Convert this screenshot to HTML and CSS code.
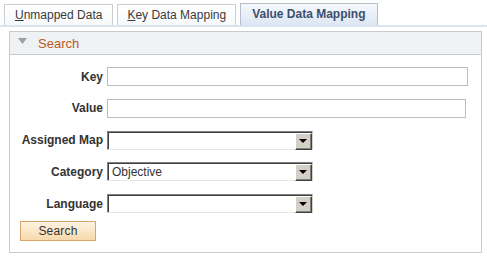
FILE: index.html
```html
<!DOCTYPE html>
<html>
<head>
<meta charset="utf-8">
<link rel="stylesheet" href="styles.css">
</head>
<body>
<div class="tabs">
  <div class="tab"><span class="ak">U</span>nmapped Data</div>
  <div class="tab"><span class="ak">K</span>ey Data Mapping</div>
  <div class="tab active">Value Data Mapping</div>
</div>
<div class="panel">
  <div class="panel-head">
    <svg class="tri" width="9" height="6" viewBox="0 0 9 6"><polygon points="0,0 9,0 4.5,6" fill="#a0a0a0"/></svg>
    <span class="panel-title">Search</span>
  </div>
  <div class="panel-body">
    <div class="form">
      <div class="row">
        <label class="lbl">Key</label>
        <div class="input w-key"></div>
      </div>
      <div class="row">
        <label class="lbl">Value</label>
        <div class="input w-value"></div>
      </div>
      <div class="row">
        <label class="lbl">Assigned Map</label>
        <div class="select"><span class="sel-val"></span><span class="sel-btn"><span class="caret"></span></span></div>
      </div>
      <div class="row">
        <label class="lbl">Category</label>
        <div class="select"><span class="sel-val">Objective</span><span class="sel-btn"><span class="caret"></span></span></div>
      </div>
      <div class="row">
        <label class="lbl">Language</label>
        <div class="select"><span class="sel-val"></span><span class="sel-btn"><span class="caret"></span></span></div>
      </div>
    </div>
    <button class="btn">Search</button>
  </div>
</div>
</body>
</html>
```

FILE: styles.css
```css
html, body {
  margin: 0;
  padding: 0;
  background: #fff;
  font-family: "Liberation Sans", Arial, sans-serif;
  font-size: 12px;
  color: #333;
}

.tabs {
  display: flex;
  align-items: flex-end;
  gap: 4px;
  padding: 3px 0 0 4px;
  border-bottom: 2px solid #d9e4f1;
  height: 22px;
}

.tab {
  box-sizing: border-box;
  height: 21px;
  padding: 0 10px 0 10px;
  border: 1px solid #c9ced5;
  border-bottom: none;
  background: linear-gradient(#ffffff, #f7f9fb);
  color: #3a3a3a;
  line-height: 20px;
  white-space: nowrap;
}

.tab:nth-child(2) {
  padding: 0 9px;
}

.ak {
  text-decoration: underline;
}

.tab.active {
  height: 22px;
  line-height: 21px;
  font-weight: bold;
  color: #3c4e6e;
  padding: 0 11px;
  border-color: #b4bfcc;
  background: linear-gradient(#f6f9fc, #dce6f2);
}

.panel {
  margin: 4px 5px 0 9px;
}

.panel-head {
  box-sizing: border-box;
  height: 24px;
  border: 1px solid #c8cacd;
  background: #eef2f4;
  display: flex;
  align-items: center;
  padding-left: 8px;
}

.tri {
  margin-top: -5px;
}

.panel-title {
  margin-left: 11px;
  font-size: 13px;
  color: #bf5a1a;
}

.panel-body {
  border: 1px solid #c8cacd;
  border-top: none;
  height: 198px;
  box-sizing: border-box;
  padding: 12px 0 0 10px;
}

.form {
  display: flex;
  flex-direction: column;
  gap: 12.75px;
}

.row {
  display: flex;
  align-items: center;
  height: 19px;
}

.lbl {
  width: 93px;
  margin-left: -10px;
  margin-right: 4px;
  text-align: right;
  font-weight: bold;
  color: #333;
  white-space: nowrap;
}

.input {
  box-sizing: border-box;
  height: 19px;
  border: 1px solid #bdbdbd;
  background: #fff;
}

.w-key { width: 361px; }
.w-value { width: 359px; }

.select {
  box-sizing: border-box;
  width: 206px;
  height: 19px;
  display: flex;
  border-top: 1px solid #808080;
  border-left: 1px solid #808080;
  border-right: 1px solid #d4d0c8;
  border-bottom: 1px solid #e8e6e0;
  box-shadow: inset 1px 1px 0 #404040;
  background: #fff;
}

.sel-val {
  flex: 1;
  padding: 2px 0 0 4px;
  line-height: 14px;
  color: #333;
}

.sel-btn {
  box-sizing: border-box;
  width: 17px;
  height: 17px;
  margin-top: 1px;
  background: #d4d0c8;
  border-top: 1px solid #ffffff;
  border-left: 1px solid #ffffff;
  border-right: 1px solid #404040;
  border-bottom: 1px solid #404040;
  box-shadow: inset -1px -1px 0 #808080;
  display: flex;
  align-items: center;
  justify-content: center;
}

.caret {
  width: 0;
  height: 0;
  border-left: 4px solid transparent;
  border-right: 4px solid transparent;
  border-top: 4px solid #000;
  margin: 0 1px 1px 0;
}

.btn {
  display: block;
  margin: 8px 0 0 0;
  box-sizing: border-box;
  width: 76px;
  height: 20px;
  padding: 0;
  border: 1px solid #d9a66a;
  background: linear-gradient(#fdf3e2, #f7d9ab);
  font-family: "Liberation Sans", Arial, sans-serif;
  font-size: 12px;
  color: #333;
  letter-spacing: 0.2px;
}
```
